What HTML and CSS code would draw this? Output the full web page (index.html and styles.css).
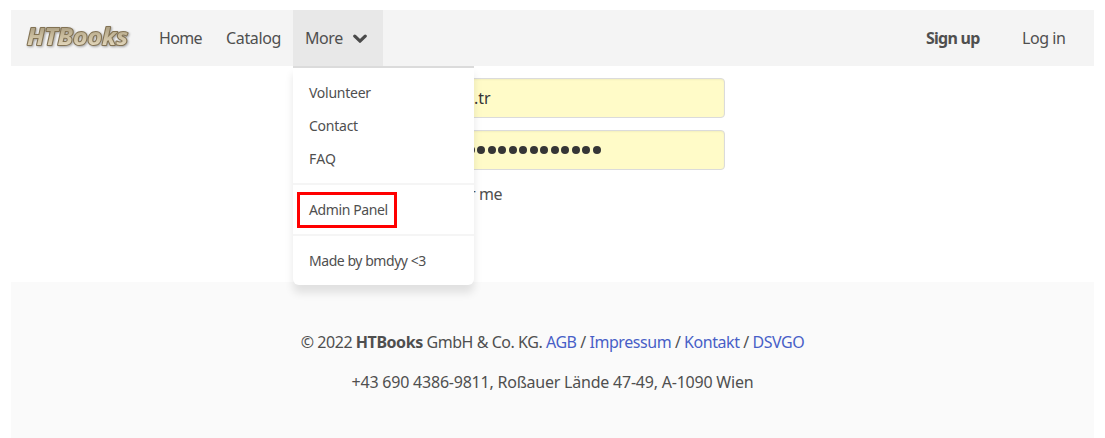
FILE: index.html
```html
<!DOCTYPE html>
<html lang="en">
<head>
<meta charset="utf-8">
<title>HTBooks</title>
<link rel="stylesheet" href="styles.css">
</head>
<body>
<nav class="navbar">
  <a class="brand"><svg width="108" height="36" viewBox="0 0 108 36">
    <defs><linearGradient id="metal" x1="0" y1="0" x2="0" y2="1"><stop offset="0.25" stop-color="#b0a386"/><stop offset="0.5" stop-color="#c9bc9d"/><stop offset="0.8" stop-color="#e2d6bb"/></linearGradient></defs>
    <text class="logo-text" x="2" y="25" textLength="101" lengthAdjust="spacingAndGlyphs" fill="url(#metal)">HTBooks</text>
  </svg></a>
  <a class="nav-item home">Home</a>
  <a class="nav-item catalog">Catalog</a>
  <div class="dropdown">
    <a class="nav-item more">More<svg class="chevron" width="14" height="10" viewBox="0 0 14 10"><path d="M1.8 2.2L7 7.2L12.2 2.2"/></svg></a>
    <div class="menu">
      <a class="menu-item">Volunteer</a>
      <a class="menu-item">Contact</a>
      <a class="menu-item faq">FAQ</a>
      <hr class="divider">
      <a class="menu-item admin">Admin Panel</a>
      <hr class="divider">
      <a class="menu-item made">Made by bmdyy &lt;3</a>
    </div>
  </div>
  <div class="nav-end"><a class="signup">Sign up</a><a class="login">Log in</a></div>
</nav>
<main class="form">
  <div class="field"><span class="email">.tr</span></div>
  <div class="field"><span class="dots"><i></i><i></i><i></i><i></i><i></i><i></i><i></i><i></i><i></i><i></i><i></i><i></i><i></i></span></div>
  <div class="remember">Remember me</div>
</main>
<footer class="footer">
  <p class="company">© 2022 <strong>HTBooks</strong> GmbH &amp; Co. KG. <a>AGB</a> / <a>Impressum</a> / <a>Kontakt</a> / <a>DSVGO</a></p>
  <p class="address">+43 690 4386-9811, Roßauer Lände 47-49, A-1090 Wien</p>
</footer>
</body>
</html>
```
FILE: styles.css
```css
* { box-sizing: border-box; }
body { margin: 0; padding: 10px 11px 0; height: 438px; overflow: hidden; display: flex; flex-direction: column; background: #fff; color: #4f4f4f; font: 16px/24px "Noto Sans", sans-serif; letter-spacing: -0.45px; }
.navbar { height: 56px; flex: none; display: flex; background: #f4f4f4; }
.brand { width: 136px; padding: 10px 0 0 14px; }
.brand svg { display: block; overflow: visible; }
.logo-text { font: italic bold 23px "Open Sans", sans-serif; letter-spacing: 0; stroke: #827253; stroke-width: 2px; stroke-linejoin: round; paint-order: stroke; filter: drop-shadow(1px 1px 1px #0005); }
.nav-item { display: flex; align-items: center; height: 56px; padding-left: 12px; white-space: nowrap; }
.home { width: 67px; letter-spacing: -0.65px; }
.catalog { width: 79px; letter-spacing: -0.35px; }
.dropdown { position: relative; }
.more { width: 90px; background: #e8e8e8; }
.chevron { margin-left: auto; margin-right: 16px; margin-top: 2px; fill: none; stroke: #4a4a4a; stroke-width: 3.2px; stroke-linecap: round; stroke-linejoin: round; }
.menu { position: absolute; z-index: 2; top: 56px; left: 0; width: 181px; height: 219px; padding-top: 8px; background: #fff; border-top: 2px solid #dbdbdb; border-radius: 0 0 6px 6px; box-shadow: 0 8px 8px #0a0a0a1a; font-size: 14px; line-height: 21px; letter-spacing: -0.25px; }
.menu-item { display: block; height: 33px; padding: 6px 16px; white-space: nowrap; }
.faq { letter-spacing: 0.2px; }
.divider { height: 2px; margin: 8px 0; border: 0; background: #f5f5f5; }
.admin { position: relative; letter-spacing: -0.4px; }
.made { letter-spacing: -0.45px; }
.admin::after { content: ""; box-sizing: border-box; position: absolute; left: 4px; top: -1px; width: 100px; height: 36px; border: 3px solid #f00; }
.nav-end { margin-left: auto; display: flex; align-items: center; white-space: nowrap; }
.signup { width: 96px; font-weight: bold; letter-spacing: -0.75px; }
.login { width: 72px; }
.form { width: 345px; height: 216px; margin-left: 369px; padding-top: 12px; }
.field { height: 40px; margin-bottom: 12px; padding-left: 93px; display: flex; align-items: center; color: #363636; background: #fffbc8; border: 1px solid #dbdbdb; border-radius: 4px; box-shadow: inset 0 1px 2px #0a0a0a0d; }
.email { letter-spacing: 0; }
.dots { display: flex; gap: 2.5px; margin-left: -7.5px; }
.dots i { width: 8px; height: 8px; border-radius: 50%; background: #363636; }
.remember { width: 122px; text-align: right; white-space: nowrap; }
.footer { flex: 1; padding-top: 48px; background: #fafafa; text-align: center; }
.footer p { margin: 0 0 16px; white-space: nowrap; }
.footer .address { letter-spacing: -0.22px; }
.footer a { color: #485fc7; }
```
